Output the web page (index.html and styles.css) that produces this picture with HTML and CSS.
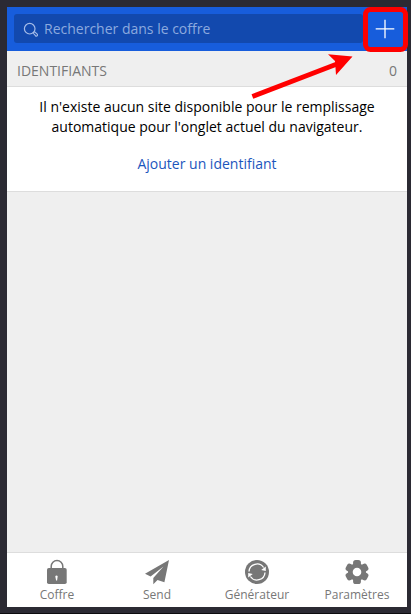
FILE: index.html
```html
<!DOCTYPE html>
<html lang="fr">
<head>
<meta charset="utf-8">
<title>Coffre</title>
<link rel="stylesheet" href="styles.css">
</head>
<body>
<div class="window">
<div class="popup">
  <header class="topbar">
    <div class="search">
      <svg class="search-icon" width="16" height="16" viewBox="0 0 16 16" fill="none" stroke="currentColor"><circle cx="6.7" cy="6.7" r="5.3" stroke-width="1.2"/><path d="M10.2 11 L11.6 9.7 L14.4 12.3 Q14.9 13.9 13.1 14.3 Z" stroke-width="1.1"/></svg>
      <span>Rechercher dans le coffre</span>
    </div>
    <button class="add" aria-label="Ajouter"><svg width="20" height="20" viewBox="0 0 20 20" stroke="#fff" stroke-width="1.3"><path d="M10 .7V19.3M.7 9.8H19.3"/></svg></button>
  </header>
  <main class="content">
    <div class="section-head"><span>IDENTIFIANTS</span><span>0</span></div>
    <section class="empty">
      <p>Il n'existe aucun site disponible pour le remplissage automatique pour l'onglet actuel du navigateur.</p>
      <a class="link">Ajouter un identifiant</a>
    </section>
  </main>
  <nav class="tabs">
    <a class="tab"><svg width="26" height="26" viewBox="0 0 26 26"><path d="M7.2 10V7.3a5.8 5.8 0 0 1 11.6 0V10" fill="none" stroke="currentColor" stroke-width="1.5"/><rect x="3" y="9" width="19.7" height="16" rx="1.8" fill="currentColor"/><path d="M11.5 18.4a1.2 1.2 0 1 1 2 0l-.4 3.2h-1z" fill="#fff"/></svg><span>Coffre</span></a>
    <a class="tab"><svg width="26" height="26" viewBox="0 0 26 26" fill="currentColor"><path d="M25 1 L1 14.8 L6.6 17.4 L19.5 7.4 L9.3 19 V25.2 L13.5 21 L20.4 23.3 Z"/></svg><span>Send</span></a>
    <a class="tab"><svg width="26" height="26" viewBox="0 0 26 26"><circle cx="13" cy="13" r="12" fill="currentColor"/><g fill="none" stroke="#fff" stroke-width="1.3"><path d="M5 12.5a8 8 0 0 1 14.6-4"/><path d="M21 13.5a8 8 0 0 1-14.6 4"/></g><path d="M21.8 7.4V12L17.2 11ZM4.2 18.6V14L8.8 15Z" fill="#fff"/></svg><span>Générateur</span></a>
    <a class="tab"><svg width="26" height="26" viewBox="0 0 26 26"><g fill="currentColor"><circle cx="13" cy="13" r="9"/><rect id="tooth" x="9.1" y="1" width="7.8" height="24" rx="2.6"/><use href="#tooth" transform="rotate(60 13 13)"/><use href="#tooth" transform="rotate(120 13 13)"/></g><circle cx="13" cy="13" r="4.3" fill="#fff"/></svg><span>Paramètres</span></a>
  </nav>
</div>
</div>
<svg class="annotation" width="411" height="110" viewBox="0 0 411 110"><rect x="365.5" y="9.5" width="40" height="40" rx="5" fill="none" stroke="#f00" stroke-width="5"/><path d="M252.4 96.5 L337 64" stroke="#f00" stroke-width="4.8"/><path d="M352.5 56.5 L328 54.2 L335 61 L336 75Z" fill="#f00"/></svg>
</body>
</html>
```
FILE: styles.css
```css
* { box-sizing: border-box; }
body {
  margin: 0;
  overflow: hidden;
  background: #fff;
  font: 14px/20px "Open Sans", "Noto Sans", sans-serif;
  color: #000;
}
.window { width: 411px; height: 614px; padding: 7px; background: #2b2a33; border-bottom: 1px solid #0c0c0e; }
.popup { width: 400px; height: 600px; display: flex; flex-direction: column; background: #efefef; }
.topbar { height: 44px; display: flex; background: #175ddc; padding: 7px 0 8px 7px; }
.search { flex: 1; display: flex; align-items: center; padding-left: 9px; border-radius: 3px; background: #1249ae; color: #8caadf; }
.search-icon { margin: 2px 5px 0 0; color: #a5bce8; }
.add { width: 44px; padding: 0; border: 0; background: none; display: flex; align-items: center; justify-content: center; }
.content { flex: 1; }
.section-head { display: flex; justify-content: space-between; height: 36px; padding: 10px 10px 5px; border-bottom: 1px solid #ddd; color: #777; }
.empty { height: 105px; padding: 10px 20px; background: #fff; border-bottom: 1px solid #ddd; text-align: center; }
.empty p { margin: 0 0 17px; }
.link { color: #1b56bd; }
.tabs { height: 55px; display: grid; grid-template-columns: repeat(4, 1fr); background: #fff; border-top: 1px solid #ddd; color: #777; }
.tab { display: flex; flex-direction: column; align-items: center; padding-top: 6px; font-size: 12px; line-height: 20px; }
.annotation { position: absolute; left: 0; top: 0; }
```
